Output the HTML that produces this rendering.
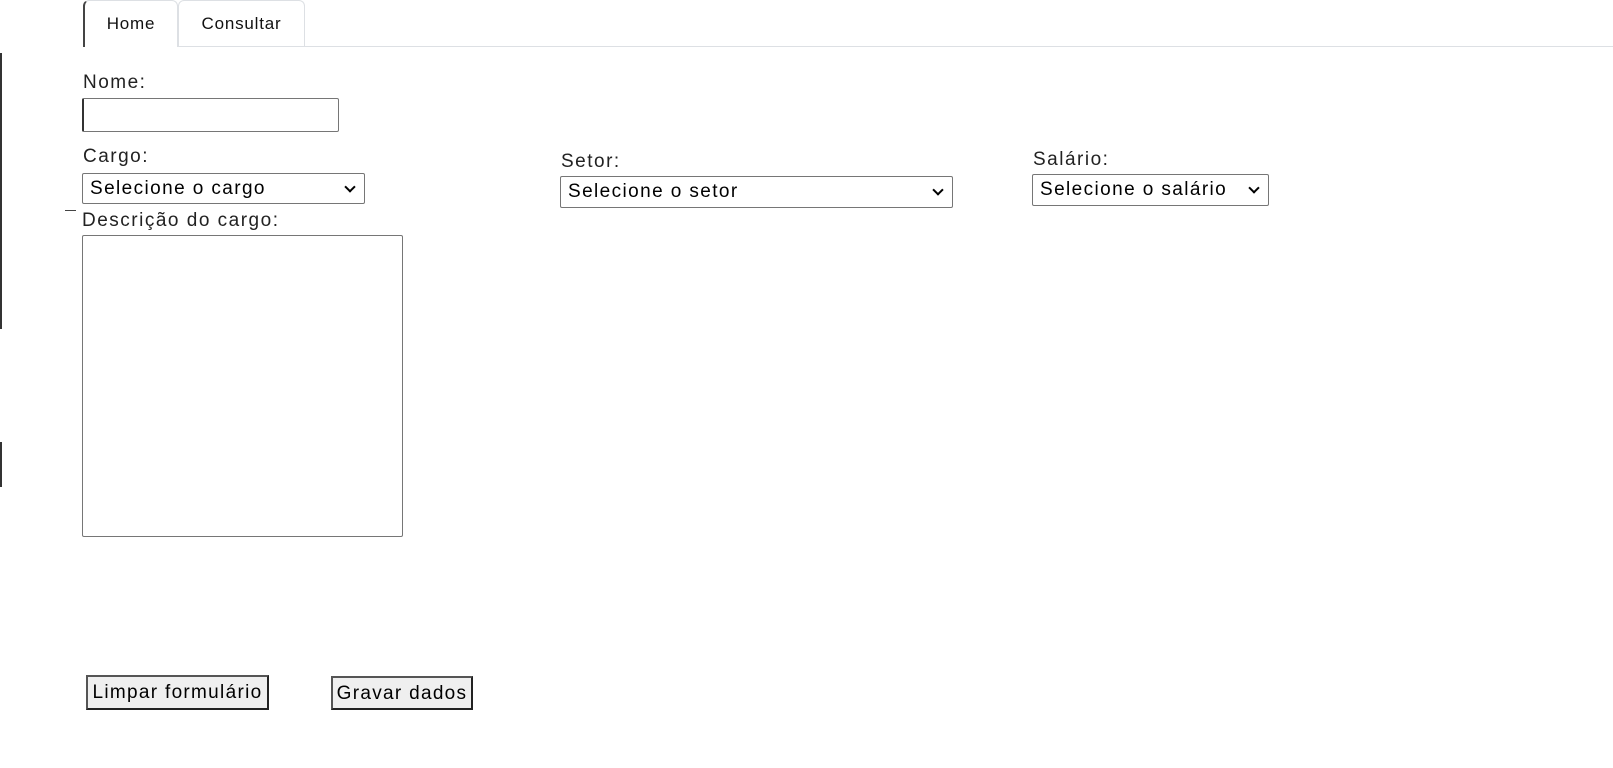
<!DOCTYPE html>
<html><head><meta charset="utf-8"><style>
*{box-sizing:border-box}
body{margin:0;width:1613px;height:768px;background:#fff;font-family:"Liberation Sans",sans-serif;color:#222;position:relative;overflow:hidden}
.a{position:absolute}
.lbl{font-size:19px;letter-spacing:1.5px;color:#222;line-height:22px}
.tab{position:absolute;top:0;height:47px;border:1px solid #dde0e4;border-bottom:none;border-radius:6px 6px 0 0;font-size:17px;letter-spacing:0.8px;color:#111;text-align:center;line-height:45px}
.sel{position:absolute;border:1px solid #767676;border-radius:2px;background:#fff;font-size:19px;letter-spacing:1.4px;color:#000;padding-left:7px;line-height:30px}
.sel:after{content:"";position:absolute;right:10px;top:9px;width:6px;height:6px;border-right:2px solid #000;border-bottom:2px solid #000;transform:rotate(45deg)}
.btn{position:absolute;background:#efefef;border:2px solid #222;border-top-color:#555;border-left-color:#555;font-size:19px;letter-spacing:1.3px;color:#000;text-align:center;line-height:31px;white-space:nowrap}
</style></head><body>
<div class="a" style="left:83px;top:46px;width:1530px;border-top:1px solid #dde0e4"></div>
<div class="tab" style="left:83px;width:95px;border-left:2px solid #444;background:#fff">Home</div>
<div class="tab" style="left:178px;width:127px">Consultar</div>
<div class="a" style="left:0;top:53px;width:2px;height:276px;background:#333"></div>
<div class="a" style="left:0;top:442px;width:2px;height:45px;background:#333"></div>
<div class="a" style="left:65px;top:210px;width:11px;height:1px;background:#444"></div>
<div class="a lbl" style="left:83px;top:72px">Nome:</div>
<div class="a" style="left:82px;top:98px;width:257px;height:34px;border:1px solid #767676;border-left:2px solid #333;border-radius:2px"></div>
<div class="a lbl" style="left:83px;top:146px">Cargo:</div>
<div class="sel" style="left:82px;top:173px;width:283px;height:31px">Selecione o cargo</div>
<div class="a lbl" style="left:82px;top:210px">Descrição do cargo:</div>
<div class="a" style="left:82px;top:235px;width:321px;height:302px;border:1px solid #767676;border-radius:2px"></div>
<div class="a lbl" style="left:561px;top:151px">Setor:</div>
<div class="sel" style="left:560px;top:176px;width:393px;height:32px">Selecione o setor</div>
<div class="a lbl" style="left:1033px;top:149px">Salário:</div>
<div class="sel" style="left:1032px;top:174px;width:237px;height:32px">Selecione o salário</div>
<div class="btn" style="left:86px;top:675px;width:183px;height:35px">Limpar formulário</div>
<div class="btn" style="left:331px;top:676px;width:142px;height:34px">Gravar dados</div>
</body></html>
